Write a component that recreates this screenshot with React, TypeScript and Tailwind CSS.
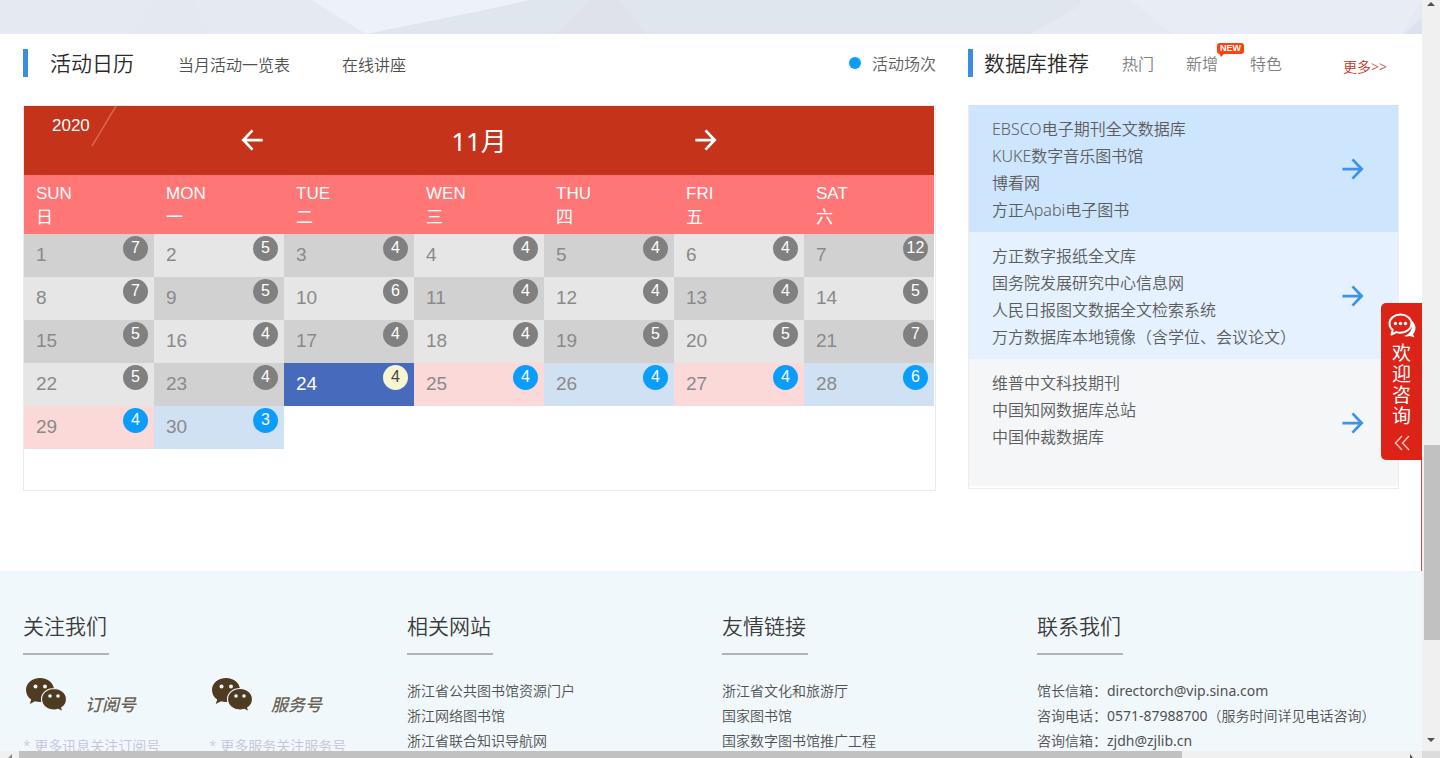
import React from 'react';

interface Day {
  day: number;
  count: number;
}

type DayTone = 'dark' | 'light' | 'today' | 'pink' | 'blue';

const TODAY = 24;

const counts = [
  7, 5, 4, 4, 4, 4, 12,
  7, 5, 6, 4, 4, 4, 5,
  5, 4, 4, 4, 5, 5, 7,
  5, 4, 4, 4, 4, 4, 6,
  4, 3,
];

const days: Day[] = counts.map((count, i) => ({ day: i + 1, count }));

const weeks: Day[][] = [0, 7, 14, 21, 28].map((start) => days.slice(start, start + 7));

const weekdays = [
  { en: 'SUN', zh: '日' },
  { en: 'MON', zh: '一' },
  { en: 'TUE', zh: '二' },
  { en: 'WEN', zh: '三' },
  { en: 'THU', zh: '四' },
  { en: 'FRI', zh: '五' },
  { en: 'SAT', zh: '六' },
];

const cellTone: Record<DayTone, string> = {
  dark: 'bg-[#d1d1d1] text-[#8a8a8a]',
  light: 'bg-[#e6e6e6] text-[#8a8a8a]',
  today: 'bg-[#486abd] text-white',
  pink: 'bg-[#fbd9d9] text-[#8a8a8a]',
  blue: 'bg-[#d0e1f4] text-[#8a8a8a]',
};

const badgeTone: Record<DayTone, string> = {
  dark: 'bg-[#808080] text-white',
  light: 'bg-[#808080] text-white',
  today: 'bg-[#f8f6d2] text-[#444444]',
  pink: 'bg-[#0a9dfc] text-white',
  blue: 'bg-[#0a9dfc] text-white',
};

const getTone = (day: number): DayTone => {
  if (day === TODAY) return 'today';
  const odd = day % 2 === 1;
  if (day > TODAY) return odd ? 'pink' : 'blue';
  return odd ? 'dark' : 'light';
};

const databases = [
  {
    bg: 'bg-[#cde5fd]',
    items: ['EBSCO电子期刊全文数据库', 'KUKE数字音乐图书馆', '博看网', '方正Apabi电子图书'],
  },
  {
    bg: 'bg-[#e5f1fe]',
    items: ['方正数字报纸全文库', '国务院发展研究中心信息网', '人民日报图文数据全文检索系统', '万方数据库本地镜像（含学位、会议论文）'],
  },
  {
    bg: 'bg-[#f4f6f8]',
    items: ['维普中文科技期刊', '中国知网数据库总站', '中国仲裁数据库'],
  },
];

const relatedSites = ['浙江省公共图书馆资源门户', '浙江网络图书馆', '浙江省联合知识导航网'];
const friendLinks = ['浙江省文化和旅游厅', '国家图书馆', '国家数字图书馆推广工程'];
const contacts = [
  { label: '馆长信箱：', value: 'directorch@vip.sina.com', note: '' },
  { label: '咨询电话：', value: '0571-87988700', note: '（服务时间详见电话咨询）' },
  { label: '咨询信箱：', value: 'zjdh@zjlib.cn', note: '' },
];

const Arrow: React.FC<{ className: string; flip?: boolean }> = ({ className, flip }) => (
  <svg viewBox="0 0 24 24" fill="none" stroke="currentColor" strokeWidth="3" className={className} aria-hidden="true">
    {flip ? <path d="M23 12H2M12 1.500L2 12l10 10.500" /> : <path d="M1 12h21M12 1.500L22 12 12 22.500" />}
  </svg>
);

const WechatIcon = () => (
  <svg viewBox="0 0 42 36" className="h-9 w-[42px] shrink-0" aria-hidden="true">
    <path
      fill="#4f3a22"
      d="M15 1C7 1 1 6.300 1 13c0 4 2 7.300 5.200 9.500L4.800 27l5.200-2.700c1.600.5 3.300.7 5 .7 8 0 14-5.300 14-12S23 1 15 1z"
    />
    <path
      fill="#4f3a22"
      stroke="#f1f8fc"
      strokeWidth="1.200"
      d="M29 11.500c-7 0-12.500 4.700-12.500 10.700S22 33 29 33c1.500 0 3-.2 4.300-.6l4.600 2.400-1.200-4c3-2 4.800-5 4.800-8.600 0-6-5.500-10.700-12.500-10.700z"
    />
    <g fill="#f1f8fc">
      <circle cx="10.500" cy="9.500" r="2" />
      <circle cx="20" cy="9.500" r="2" />
      <circle cx="25" cy="19" r="1.800" />
      <circle cx="33" cy="19" r="1.800" />
    </g>
  </svg>
);

const ChatIcon = () => (
  <svg viewBox="0 0 28 25" className="h-[25px] w-7" aria-hidden="true">
    <path fill="#fff" d="M23.500 7.500c2.600 2 4 4.600 4 7.500 0 2.300-.9 4.300-2.400 6l1.400 3.500-4.500-1.500c-1.800.6-4.200.7-6.500.1 5.500-1.300 10.500-6.500 8-15.600z" />
    <path
      fill="#dc2317"
      stroke="#fff"
      strokeWidth="2"
      strokeLinejoin="round"
      d="M12.500 1.500C6.400 1.500 1.500 5.500 1.500 10.600c0 2.600 1.200 4.800 3.200 6.400L3.500 21.500l4.800-2.400c1.300.4 2.700.6 4.200.6 6.100 0 11-4.100 11-9.100s-4.900-9.100-11-9.100z"
    />
    <g fill="#fff">
      <circle cx="7.500" cy="10.500" r="1.700" />
      <circle cx="12.500" cy="10.500" r="1.700" />
      <circle cx="17.500" cy="10.500" r="1.700" />
    </g>
  </svg>
);

const Banner = () => (
  <svg viewBox="0 0 1422 34" preserveAspectRatio="none" className="block h-[34px] w-full" aria-hidden="true">
    <rect width="1422" height="34" fill="#e5eaf2" />
    <path d="M160 0h34l14 34h-80z" fill="#e3e8f1" />
    <path d="M312 0h230L366 34z" fill="#edf2f8" />
    <path d="M480 11L530 0h560l-60 34H366z" fill="#dfe6ed" />
    <path d="M590 0h30l25 34h-90z" fill="#dfe2ea" />
    <path d="M1080 0h342v34h-342z" fill="#e5e9f2" />
    <path d="M1130 0h292l-20 34h-230z" fill="#e8ecf5" />
    <path d="M1422 18v16h-18z" fill="#dbe1ed" />
  </svg>
);

const Calendar = () => (
  <section>
    <div className="mb-7 flex h-7 items-center text-[#505050]">
      <span className="mr-[22px] h-7 w-[5px] bg-[#3b8de3]" />
      <h2 className="pt-[2px] text-[21px] text-[#2b2b2b]">活动日历</h2>
      <nav className="ml-11 flex gap-[52px] pt-[3px] text-base">
        <a href="#list">当月活动一览表</a>
        <a href="#lecture">在线讲座</a>
      </nav>
      <span className="ml-auto mr-[11px] h-3 w-3 rounded-full bg-[#0a9dfc]" />
      <span className="pt-[2px] text-base text-[#606060]">活动场次</span>
    </div>

    <div className="border border-[#ececec] pb-[41px] pr-px">
      <div className="relative flex h-[69px] items-center justify-between bg-[#c4331a] px-[217px] text-white">
        <span className="absolute left-7 top-2 font-[Liberation_Sans] text-[17px] font-normal leading-6">2020</span>
        <svg viewBox="0 0 26 40" className="absolute left-[67px] top-0 h-10 w-[26px]" aria-hidden="true">
          <path d="M25 0L1 40" stroke="#dd6550" strokeWidth="1.500" />
        </svg>
        <button type="button" aria-label="上个月" className="pb-[2px]">
          <Arrow className="h-[22px] w-[23px]" flip />
        </button>
        <span className="pt-px text-[26px] font-normal">11月</span>
        <button type="button" aria-label="下个月" className="pb-[2px]">
          <Arrow className="h-[22px] w-[23px]" />
        </button>
      </div>

      <table className="w-full table-fixed border-collapse font-[Liberation_Sans,Noto_Sans_CJK_SC,sans-serif] font-normal">
        <thead>
          <tr className="h-[59px] bg-[#ff7676] text-left text-[17px] leading-6 text-white">
            {weekdays.map((w) => (
              <th key={w.en} className="px-3 pb-0 pt-[2px] font-normal">
                <span className="block">{w.en}</span>
                <span className="block">{w.zh}</span>
              </th>
            ))}
          </tr>
        </thead>
        <tbody>
          {weeks.map((week) => (
            <tr key={week[0].day} className="h-[43px]">
              {week.map(({ day, count }) => {
                const tone = getTone(day);
                return (
                  <td key={day} className={`p-0 ${cellTone[tone]}`}>
                    <div className="flex h-[43px] items-start justify-between pl-3 pr-[6px] pt-[2px]">
                      <span className="pt-[7px] text-[19px] leading-6">{day}</span>
                      <span className={`h-[25px] w-[25px] rounded-full text-center text-base leading-6 ${badgeTone[tone]}`}>
                        {count}
                      </span>
                    </div>
                  </td>
                );
              })}
            </tr>
          ))}
        </tbody>
      </table>
    </div>
  </section>
);

const Databases = () => (
  <section>
    <div className="mb-7 flex h-7 items-center">
      <span className="mr-[11px] h-7 w-[5px] bg-[#3b8de3]" />
      <h2 className="pt-[2px] text-[21px] text-[#2b2b2b]">数据库推荐</h2>
      <nav className="ml-[33px] flex gap-8 pt-[2px] text-base text-[#808080]">
        <a href="#hot">热门</a>
        <a href="#new" className="relative">
          新增
          <span className="absolute -top-[9px] left-[31px] h-[11px] w-[27px] rounded-[3px] bg-[#fb4310] text-center font-[Liberation_Sans] text-[9px] font-bold leading-[11px] text-white">
            NEW
            <svg viewBox="0 0 6 4" className="absolute left-[2px] top-[10px] h-1 w-[6px]" aria-hidden="true">
              <path d="M0 0h6L2 4z" fill="#fb4310" />
            </svg>
          </span>
        </a>
        <a href="#special">特色</a>
      </nav>
      <a href="#more" className="ml-auto mr-3 pt-2 text-sm text-[#c4331a]">
        更多&gt;&gt;
      </a>
    </div>

    <div className="border-x border-b border-[#ececec] pb-[2px]">
      {databases.map((group) => (
        <div key={group.items[0]} className={`flex h-[127px] items-center justify-between pl-[23px] pr-[34px] ${group.bg}`}>
          <ul className="h-[106px] text-base leading-[27px] text-[#5c5c5c]">
            {group.items.map((item) => (
              <li key={item}>
                <a href="#db">{item}</a>
              </li>
            ))}
          </ul>
          <Arrow className="h-[22px] w-[23px] text-[#3d92ea]" />
        </div>
      ))}
    </div>
  </section>
);

const FooterTitle: React.FC<{ children: React.ReactNode }> = ({ children }) => (
  <h3 className="h-[46px] w-[86px] whitespace-nowrap border-b-2 border-[#b1b1b9] text-[21px] leading-[34px] text-[#3b3b3b]">
    {children}
  </h3>
);

const FooterColumn: React.FC<{ title: string; children: React.ReactNode }> = ({ title, children }) => (
  <div>
    <FooterTitle>{title}</FooterTitle>
    <ul className="mt-[23px] whitespace-nowrap text-sm leading-[25px]">{children}</ul>
  </div>
);

const FooterLinks: React.FC<{ title: string; items: string[] }> = ({ title, items }) => (
  <FooterColumn title={title}>
    {items.map((item) => (
      <li key={item}>
        <a href="#link">{item}</a>
      </li>
    ))}
  </FooterColumn>
);

const Account: React.FC<{ name: string; note: string }> = ({ name, note }) => (
  <div className="w-[186px]">
    <div className="flex h-9 pl-[2px]">
      <WechatIcon />
      <span className="ml-[18px] mt-[13px] text-[17px] font-medium italic leading-[30px] text-[#6b6257]">{name}</span>
    </div>
    <p className="mt-5 whitespace-nowrap text-sm leading-[25px] text-[#c4c4d8]">* {note}</p>
  </div>
);

const Footer = () => (
  <footer className="grid grid-cols-[384fr_315fr_315fr_362fr] bg-[#f1f8fc] px-[23px] pb-16 pt-[38px] text-[#505050]">
    <div>
      <FooterTitle>关注我们</FooterTitle>
      <div className="mt-[22px] flex">
        <Account name="订阅号" note="更多讯息关注订阅号" />
        <Account name="服务号" note="更多服务关注服务号" />
      </div>
    </div>
    <FooterLinks title="相关网站" items={relatedSites} />
    <FooterLinks title="友情链接" items={friendLinks} />
    <FooterColumn title="联系我们">
      {contacts.map((c) => (
        <li key={c.value}>
          {c.label}
          <span className="font-normal">{c.value}</span>
          {c.note}
        </li>
      ))}
    </FooterColumn>
  </footer>
);

// Floating consult tab pinned to the right edge of the page
const ConsultTab = () => (
  <>
    <span className="absolute right-0 top-[303px] h-[268px] w-px bg-[#c9504a]" />
    <button
      type="button"
      className="absolute right-0 top-[303px] flex w-[41px] flex-col items-center rounded-l-[5px] bg-[#dc2317] pb-[9px] pt-[10px] text-white"
    >
      <ChatIcon />
      <span className="mt-[5px] w-5 text-[19px] font-normal leading-[21px]">欢迎咨询</span>
      <svg viewBox="0 0 16 16" fill="none" stroke="#f7c2bc" strokeWidth="1.500" className="mt-2 h-4 w-4" aria-hidden="true">
        <path d="M8 1L1.500 8 8 15M15 1L8.500 8l6.500 7" />
      </svg>
    </button>
  </>
);

const VerticalScrollbar = () => (
  <div className="flex w-[18px] shrink-0 flex-col items-center bg-[#f0f0f0]" aria-hidden="true">
    <svg viewBox="0 0 8 4" className="mt-[2px] h-1 w-2">
      <path d="M0 4L4 0l4 4z" fill="#505050" />
    </svg>
    <div className="flex w-full flex-1 flex-col pl-[2px]">
      <span className="flex-[438]" />
      <span className="flex-[195] bg-[#c1c1c1]" />
      <span className="flex-[98]" />
    </div>
    <svg viewBox="0 0 8 4" className="mb-[9px] h-1 w-2">
      <path d="M0 0l4 4 4-4z" fill="#505050" />
    </svg>
  </div>
);

const HorizontalScrollbar = () => (
  <div className="flex h-[7px] shrink-0 bg-[#f0f0f0]" aria-hidden="true">
    <svg viewBox="0 0 19 7" className="h-[7px] w-[19px]">
      <path d="M12 3v4H8z" fill="#8a8a8a" />
    </svg>
    <span className="flex-[1163] bg-[#c1c1c1]" />
    <span className="flex-[222]" />
    <svg viewBox="0 0 18 7" className="h-[7px] w-[18px]">
      <path d="M6 3v4h3z" fill="#505050" />
    </svg>
    <span className="w-[18px] bg-[#dcdcdc]" />
  </div>
);

export default function App() {
  return (
    <div className="flex h-screen flex-col overflow-hidden bg-white font-[Noto_Sans,Noto_Sans_CJK_SC,sans-serif] font-[350]">
      <div className="flex min-h-0 flex-1">
        <div className="relative min-w-0 flex-1 overflow-hidden">
          <Banner />
          <main className="grid grid-cols-[913fr_431fr] gap-8 px-[23px] pb-20 pt-[15px]">
            <Calendar />
            <Databases />
          </main>
          <Footer />
          <ConsultTab />
        </div>
        <VerticalScrollbar />
      </div>
      <HorizontalScrollbar />
    </div>
  );
}
